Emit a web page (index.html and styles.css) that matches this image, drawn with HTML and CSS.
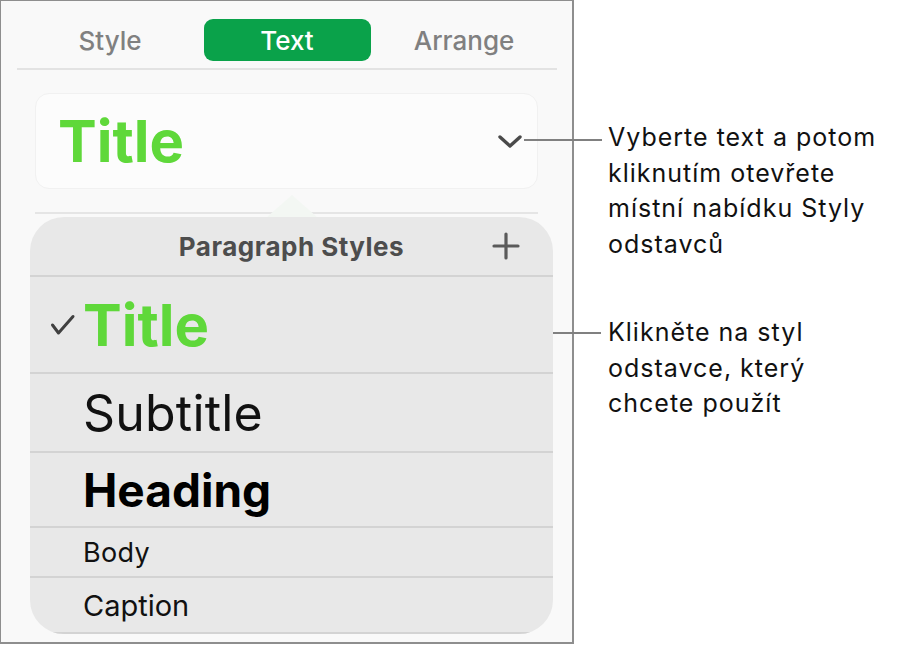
FILE: index.html
```html
<!DOCTYPE html>
<html lang="cs">
<head>
<meta charset="utf-8">
<title>Paragraph Styles</title>
<link rel="stylesheet" href="styles.css">
</head>
<body>
<div class="page">
  <div class="panel">
    <div class="tabs">
      <div class="tab">Style</div>
      <div class="tab active">Text</div>
      <div class="tab">Arrange</div>
    </div>
    <div class="style-box">
      <span class="style-name">Title</span>
      <svg class="chevron" width="26" height="15" viewBox="0 0 26 15"><path d="M3 3 L13 12 L23 3" fill="none" stroke="#4a4a4a" stroke-width="3.4" stroke-linecap="round" stroke-linejoin="round"/></svg>
    </div>
    <div class="divider"></div>
    <div class="popover">
      <div class="pointer"></div>
      <div class="pop-head">
        <span class="pop-title">Paragraph Styles</span>
        <svg class="plus" width="28" height="28" viewBox="0 0 28 28"><path d="M14 2 V26 M2 14 H26" fill="none" stroke="#5a5a5a" stroke-width="3.2" stroke-linecap="round"/></svg>
      </div>
      <ul class="style-list">
        <li class="row row-title"><svg class="check" width="26" height="22" viewBox="0 0 26 22"><path d="M2.5 11 L8.5 19 L23 2.5" fill="none" stroke="#404040" stroke-width="3" stroke-linecap="round" stroke-linejoin="round"/></svg><span class="label">Title</span></li>
        <li class="row row-subtitle"><span></span><span class="label">Subtitle</span></li>
        <li class="row row-heading"><span></span><span class="label">Heading</span></li>
        <li class="row row-body"><span></span><span class="label">Body</span></li>
        <li class="row row-caption"><span></span><span class="label">Caption</span></li>
      </ul>
    </div>
  </div>
  <div class="callouts">
    <p class="callout c1">Vyberte text a potom<br>kliknutím otevřete<br>místní nabídku Styly<br>odstavců</p>
    <p class="callout c2">Klikněte na styl<br>odstavce, který<br>chcete použít</p>
  </div>
</div>
</body>
</html>
```
FILE: styles.css
```css
* { box-sizing: border-box; }
html, body { margin: 0; padding: 0; background: #ffffff; }
body { font-family: Inter, "Noto Sans", sans-serif; }

.page {
  display: flex;
  width: 904px;
  height: 646px;
  position: relative;
}

.panel {
  width: 574px;
  height: 644px;
  flex: none;
  background: #f9f9f9;
  border: 1px solid #8e8e8e;
  border-right-width: 2px;
  border-bottom-width: 2px;
}

.tabs {
  margin: 18px 15px 0 16px;
  display: grid;
  grid-template-columns: repeat(3, 177px);
  justify-content: center;
  padding-bottom: 7px;
  border-bottom: 2px solid #e3e3e3;
}
.tab {
  height: 42px;
  display: flex;
  align-items: center;
  justify-content: center;
  font-size: 26px;
  font-weight: 500;
  color: #808080;
}
.tab.active {
  width: 167px;
  justify-self: center;
  background: #0aa24a;
  color: #ffffff;
  border-radius: 9px;
}

.style-box {
  margin: 23px 34px 0 34px;
  height: 96px;
  background: #fcfcfc;
  border: 1px solid #f1f1f1;
  border-radius: 14px;
  display: flex;
  align-items: center;
  justify-content: space-between;
  padding: 0 14px 0 22px;
}
.style-name {
  font-size: 58px;
  font-weight: 700;
  color: #5fd83a;
  line-height: 1;
}

.divider {
  margin: 23px 34px 0 34px;
  height: 2px;
  background: #e5e5e5;
}

.popover {
  position: relative;
  margin: 3px 19px 0 29px;
  background: #e8e8e8;
  border-radius: 34px;
}
.pointer {
  position: absolute;
  top: -22px;
  left: 237px;
  width: 50px;
  height: 22px;
  background: #f3f7f3;
  clip-path: polygon(50% 0, 100% 100%, 0 100%);
}

.pop-head {
  height: 60px;
  display: grid;
  grid-template-columns: 1fr auto 1fr;
  align-items: center;
  border-bottom: 2px solid #d3d3d3;
}
.pop-title {
  grid-column: 2;
  font-size: 26px;
  font-weight: 700;
  color: #4d4d4d;
  letter-spacing: 0.5px;
}
.plus {
  grid-column: 3;
  justify-self: end;
  margin-right: 33px;
}

.style-list {
  list-style: none;
  margin: 0;
  padding: 0;
  overflow: hidden;
  border-radius: 0 0 34px 34px;
}
.row {
  display: grid;
  grid-template-columns: 33px 1fr;
  align-items: center;
  padding-left: 20px;
  border-bottom: 2px solid #d3d3d3;
  color: #000;
}
.label { line-height: 1; }
.row-title { height: 97px; }
.row-title .label { font-size: 58px; font-weight: 700; color: #5fd83a; }
.row-subtitle { height: 79px; }
.row-subtitle .label { font-size: 50px; font-weight: 400; color: #111; letter-spacing: 0.2px; }
.row-heading { height: 75px; }
.row-heading .label { font-size: 46px; font-weight: 700; }
.row-body { height: 50px; }
.row-body .label { font-size: 27px; font-weight: 400; color: #111; letter-spacing: 0.3px; }
.row-caption { height: 56px; }
.row-caption .label { font-size: 29px; font-weight: 400; color: #111; }

.callouts {
  display: flex;
  flex-direction: column;
  margin-left: 34px;
  padding-top: 120px;
}
.callout {
  position: relative;
  margin: 0;
  font-size: 25px;
  line-height: 35.5px;
  color: #111;
  letter-spacing: 1px;
}
.callout::before {
  content: "";
  position: absolute;
  height: 2px;
  background: #808080;
}
.c1::before { top: 19px; left: -84px; width: 78px; }
.c2 { margin-top: 53px; }
.c2::before { top: 17px; left: -55px; width: 48px; }
```
